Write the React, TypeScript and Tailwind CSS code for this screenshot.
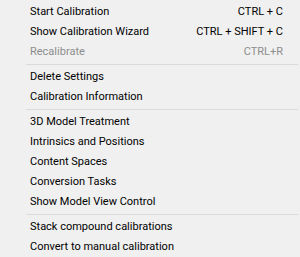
import React from 'react';

type Entry =
  | { kind: 'item'; label: string; shortcut?: string; disabled?: boolean }
  | { kind: 'sep' };

const entries: Entry[] = [
  { kind: 'item', label: 'Start Calibration', shortcut: 'CTRL + C' },
  { kind: 'item', label: 'Show Calibration Wizard', shortcut: 'CTRL + SHIFT + C' },
  { kind: 'item', label: 'Recalibrate', shortcut: 'CTRL+R', disabled: true },
  { kind: 'sep' },
  { kind: 'item', label: 'Delete Settings' },
  { kind: 'item', label: 'Calibration Information' },
  { kind: 'sep' },
  { kind: 'item', label: '3D Model Treatment' },
  { kind: 'item', label: 'Intrinsics and Positions' },
  { kind: 'item', label: 'Content Spaces' },
  { kind: 'item', label: 'Conversion Tasks' },
  { kind: 'item', label: 'Show Model View Control' },
  { kind: 'sep' },
  { kind: 'item', label: 'Stack compound calibrations' },
  { kind: 'item', label: 'Convert to manual calibration' },
];

const App: React.FC = () => {
  return (
    <div
      className="w-[300px] h-[257px] bg-[#f0f0f0] pt-[2px] text-[11px] text-black overflow-hidden"
      style={{ fontFamily: 'Roboto, "Noto Sans", sans-serif' }}
    >
      {entries.map((e, i) =>
        e.kind === 'sep' ? (
          <div key={i} className="h-[5px] flex items-center pl-[26px] pr-[2px]">
            <div className="h-px w-full bg-[#dadada]" />
          </div>
        ) : (
          <div
            key={i}
            className={`h-[20px] flex items-center justify-between pl-[30px] pr-[17px] ${
              e.disabled ? 'text-[#8d8d8d]' : ''
            }`}
          >
            <span>{e.label}</span>
            {e.shortcut && <span>{e.shortcut}</span>}
          </div>
        )
      )}
    </div>
  );
};

export default App;
